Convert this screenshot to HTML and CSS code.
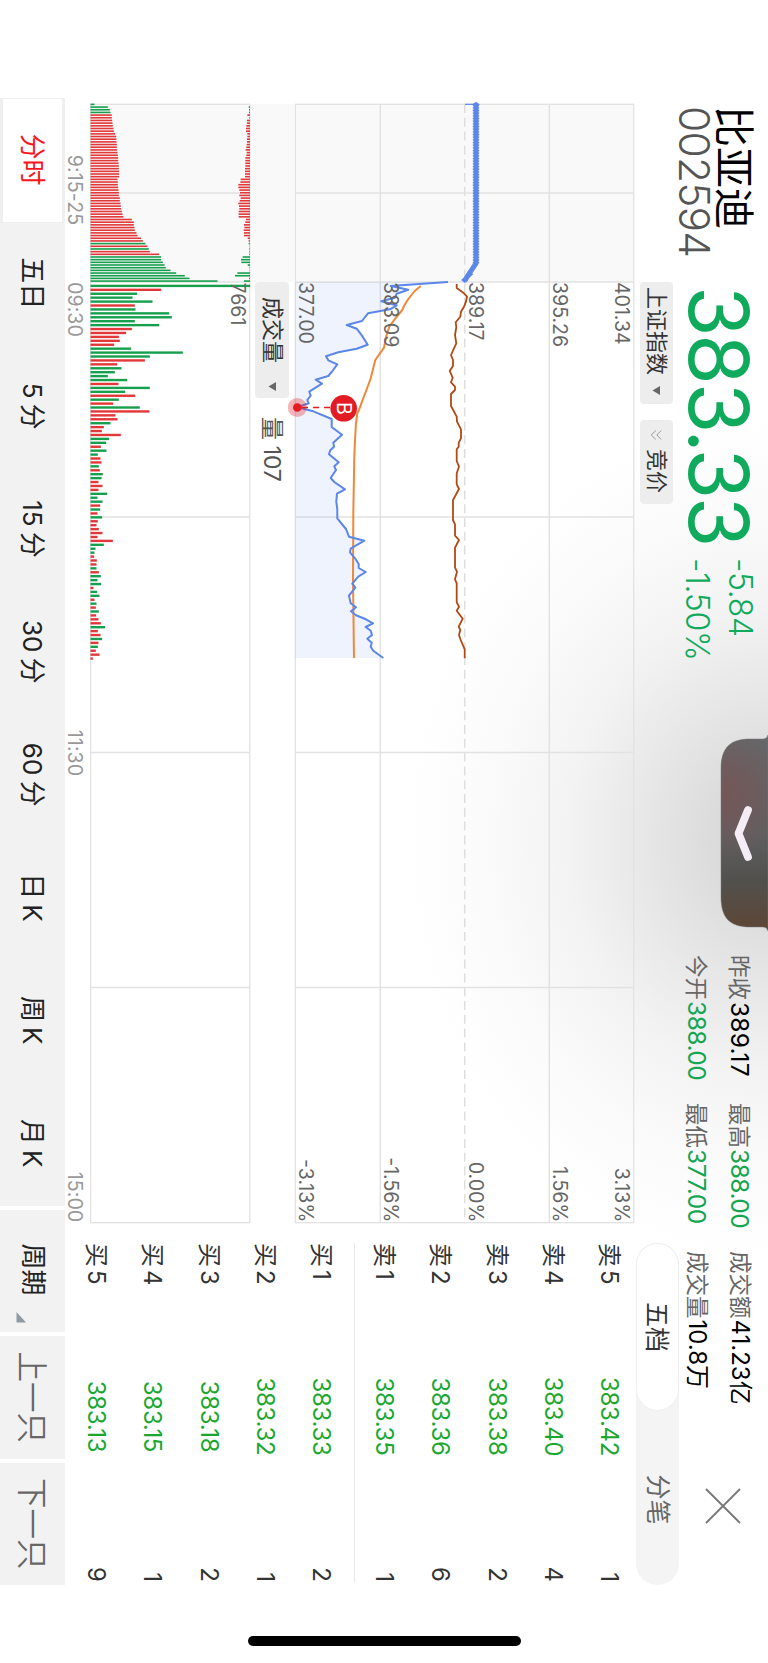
FILE: index.html
```html
<!DOCTYPE html>
<html lang="zh-CN">
<head>
<meta charset="utf-8">
<title>比亚迪 002594</title>
<link rel="stylesheet" href="styles.css">
</head>
<body>
<div class="device">
<div class="screen">
  <header class="quote">
    <div class="identity">
      <div class="name">比亚迪</div>
      <div class="code">002594</div>
    </div>
    <div class="price">383.33</div>
    <div class="change">
      <div>-5.84</div>
      <div class="pct">-1.50%</div>
    </div>
    <div class="stats">
      <div>昨收<b class="loose">389.17</b></div><div>最高<b class="down">388.00</b></div><div>成交额<b class="wide">41.23亿</b></div>
      <div>今开<b class="down">388.00</b></div><div>最低<b class="down">377.00</b></div><div>成交量<b class="wide">10.8万</b></div>
    </div>
    <svg class="close" width="38" height="38" viewBox="0 0 38 38"><path d="M2 2L36 36M36 2L2 36" fill="none" stroke="#777" stroke-width="1.8"/></svg>
  </header>

  <main class="main">
    <section class="market">
      <div class="pills">
        <div class="pill index">上证指数<svg width="9" height="8" viewBox="0 0 9 8"><path d="M0 0H9L4.5 7.5Z" fill="#666"/></svg></div>
        <div class="pill auction"><svg width="10" height="12" viewBox="0 0 10 12"><path d="M.6 .8L5 5.2L9.400 .8M.6 6.200L5 10.800L9.400 6.200" fill="none" stroke="#999" stroke-width="1"/></svg>竞价</div>
      </div>
      <svg class="chart" id="price" width="1119" height="339" viewBox="0 0 1119 339"></svg>
      <div class="indicator">
        <div class="band"></div>
        <div class="pill volume">成交量<svg width="9" height="8" viewBox="0 0 9 8"><path d="M0 0H9L4.500 7.500Z" fill="#666"/></svg></div>
        <div class="amount">量 107</div>
      </div>
      <svg class="chart" id="volume" width="1119" height="160" viewBox="0 0 1119 160"></svg>
      <svg class="chart" id="axis" width="1119" height="25" viewBox="0 0 1119 25"></svg>
    </section>

    <aside class="book">
      <div class="switch"><div class="on">五档</div><div class="off">分笔</div></div>
      <div class="rows asks">
        <div class="row"><span>卖<i>5</i></span><b>383.42</b><em>1</em></div>
        <div class="row"><span>卖<i>4</i></span><b>383.40</b><em>4</em></div>
        <div class="row"><span>卖<i>3</i></span><b>383.38</b><em>2</em></div>
        <div class="row"><span>卖<i>2</i></span><b>383.36</b><em>6</em></div>
        <div class="row"><span>卖<i>1</i></span><b>383.35</b><em>1</em></div>
      </div>
      <div class="rows bids">
        <div class="row"><span>买<i>1</i></span><b>383.33</b><em>2</em></div>
        <div class="row"><span>买<i>2</i></span><b>383.32</b><em>1</em></div>
        <div class="row"><span>买<i>3</i></span><b>383.18</b><em>2</em></div>
        <div class="row"><span>买<i>4</i></span><b>383.15</b><em>1</em></div>
        <div class="row"><span>买<i>5</i></span><b>383.13</b><em>9</em></div>
      </div>
    </aside>
  </main>

  <nav class="tabs">
    <div class="periods">
      <div class="tab active">分时</div><div class="tab">五日</div><div class="tab">5<s></s>分</div><div class="tab">15<s></s>分</div><div class="tab">30<s></s>分</div><div class="tab">60<s></s>分</div><div class="tab">日<s></s>K</div><div class="tab">周<s></s>K</div><div class="tab">月<s></s>K</div>
    </div>
    <div class="action cycle">周期<svg width="11" height="10" viewBox="0 0 11 10"><path d="M10.500 0V9.500H0Z" fill="#8f9aa3"/></svg></div>
    <div class="action step">上一只</div>
    <div class="action step">下一只</div>
  </nav>

  <svg class="drawer" width="210" height="48" viewBox="0 0 210 48">
    <defs>
      <linearGradient id="dg" x1="0" x2="1" y1="0" y2="0"><stop offset="0" stop-color="#66686a"/><stop offset=".5" stop-color="#5e6062"/><stop offset=".75" stop-color="#52504c"/><stop offset="1" stop-color="#5e4636"/></linearGradient>
      <radialGradient id="dr" gradientUnits="userSpaceOnUse" cx="66" cy="46" r="68"><stop offset="0" stop-color="#775556" stop-opacity=".9"/><stop offset=".4" stop-color="#775556" stop-opacity=".6"/><stop offset="1" stop-color="#775556" stop-opacity="0"/></radialGradient>
    </defs>
    <path d="M7 0Q11 1 11 5V18C11 38 20 47 41 47H169C190 47 199 38 199 18V5Q199 1 203 0Z" fill="url(#dg)"/>
    <path d="M7 0Q11 1 11 5V18C11 38 20 47 41 47H169C190 47 199 38 199 18V5Q199 1 203 0Z" fill="url(#dr)" stroke="#777" stroke-opacity=".5"/>
    <path d="M82 20L105.500 29.500L129 20" fill="none" stroke="#f4edf5" stroke-width="7.800" stroke-linecap="round" stroke-linejoin="round"/>
  </svg>
  <div class="home"></div>
</div>
</div>
<script src="chart.js"></script>
</body>
</html>
```
FILE: styles.css
```css
* { box-sizing: border-box; }
body { margin: 0; background: #fff; }
b, i, em, s { font-weight: inherit; font-style: normal; text-decoration: none; }

.device { width: 768px; height: 1663px; overflow: hidden; }

/* Landscape layout shown on a portrait canvas */
.screen {
  position: relative;
  width: 1663px;
  height: 768px;
  transform-origin: 0 0;
  transform: translateX(768px) rotate(90deg);
  display: flex;
  flex-direction: column;
  font-family: Inter, "Noto Sans CJK SC", sans-serif;
  color: #333;
  white-space: nowrap;
  background: radial-gradient(ellipse 420px 360px at 840px 0, #d3d3d3 0, #dedede 20%, #e9e9e9 38%, #f3f3f3 56%, #fafafa 76%, #fff 100%);
}

.quote { height: 89px; padding-left: 106px; display: flex; align-items: flex-start; flex: none; }
.identity { width: 181px; flex: none; }
.name { margin-top: 14px; font-size: 41px; line-height: 40px; color: #000; }
.code { font-size: 42.500px; line-height: 40px; font-weight: 350; color: #555; letter-spacing: -.8px; }
.price { width: 273px; flex: none; margin: 10px 0 0 -1px; font-size: 82px; line-height: 80px; font-weight: 370; color: #0faa5c; letter-spacing: -2.300px; }
.change { width: 397px; flex: none; margin-left: -1px; padding-top: 12px; font-size: 32px; line-height: 32px; color: #0faa5c; letter-spacing: -.4px; font-weight: 350; }
.change .pct { margin-top: 11px; letter-spacing: -.3px; }
.stats {
  width: 448px;
  flex: none;
  padding-top: 12px;
  display: grid;
  grid-template-columns: 148px 148px 152px;
  grid-auto-rows: 32px;
  row-gap: 11px;
  line-height: 32px;
  font-size: 22.500px;
  color: #666;
}
.stats b { color: #000; font-size: 24.500px; letter-spacing: -.5px; margin-left: 1px; }
.stats b.loose { letter-spacing: .2px; margin-left: 2px; }
.stats b.down { color: #16a550; }
.stats b.wide { font-size: 24px; letter-spacing: 0; }
.close { margin: 26px 0 0 84px; }

.main { height: 614px; flex: none; display: flex; padding-left: 104px; gap: 20px; }
.market { width: 1119px; padding-top: 6px; }
.pills { display: flex; gap: 16px; padding-left: 178px; height: 39px; }
.pill { height: 33px; border-radius: 4px; background: #ededed; display: flex; align-items: center; font-size: 22px; line-height: 33px; }
.pill.index { width: 122px; padding-left: 5px; gap: 11px; }
.pill.auction { width: 84px; padding-left: 10px; gap: 9px; }
.chart { display: block; overflow: visible; }
.indicator { height: 45px; display: flex; align-items: center; }
.band { width: 178px; height: 45px; background: #f9f9f9; }
.pill.volume { width: 116px; height: 34px; padding-left: 15px; gap: 19px; }
.amount { padding: 0 0 3px 19px; font-size: 23px; color: #555; letter-spacing: -.3px; }

.book { width: 342px; }
.switch { height: 43px; border-radius: 22px; background: #f4f4f4; display: flex; font-size: 25px; line-height: 42px; text-align: center; }
.switch .on { width: 168px; border-radius: 22px; border: 1px solid #eee; background: #fff; }
.switch .off { width: 174px; color: #666; padding-left: 3px; }
.rows { margin: 0 3px 0 0; }
.asks { margin-top: -1px; }
.bids { margin-top: 1px; border-top: 1.500px solid #e9e9e9; padding-top: 5px; }
.row { height: 56.200px; line-height: 56px; display: grid; grid-template-columns: 94px 159px 86px; font-size: 24px; }
.row i { margin-left: 3px; }
.row b { color: #1ba72f; text-align: center; letter-spacing: -.3px; }
.row em { text-align: right; }

.tabs { height: 65px; flex: none; margin-left: 98px; display: flex; gap: 4px; width: 1487px; font-size: 26px; line-height: 66px; }
.periods { width: 1108px; background: #f2f2f2; display: flex; }
.tab { flex: 1; text-align: center; color: #222; padding-right: 2px; }
.tab s { display: inline-block; width: 5px; }
.tab.active { background: #fff; border: 2px solid #efefef; border-width: 3px 1px; line-height: 60px; color: #f6161c; }
.action { background: #f2f2f2; color: #222; }
.cycle { width: 122.500px; padding-left: 34px; display: flex; align-items: flex-end; gap: 16px; }
.cycle svg { margin-bottom: 16px; }
.step { width: 122.500px; text-align: center; font-size: 30.500px; color: #666; font-weight: 350; }

.drawer { position: absolute; left: 728px; top: 0; }
.home { position: absolute; left: 1636px; top: 247px; width: 10px; height: 273px; border-radius: 5px; background: #000; }

.lbl { font-size: 19.500px; fill: #666; }
.time { font-size: 19.500px; fill: #999; letter-spacing: .1px; }
```
FILE: chart.js
```javascript
const NS = 'http://www.w3.org/2000/svg';
function add(parent, tag, attrs, text) {
  const el = document.createElementNS(NS, tag);
  for (const k in attrs) el.setAttribute(k, attrs[k]);
  if (text) el.textContent = text;
  parent.appendChild(el);
  return el;
}
const W = 1119, OPEN = 178, GRID = '#e2e2e2';
const RED = '#e2383a', GREEN = '#16a04e';
const columns = [89, OPEN, 413, 648.5, 883.500];

/* ---------- price pane ---------- */
const price = document.getElementById('price');
add(price, 'rect', { x: 0, y: 0, width: OPEN, height: 339, fill: '#f9f9f9' });
[84.700, 253.700].forEach(y => add(price, 'path', { d: `M0 ${y}H${W}`, stroke: GRID, 'stroke-width': 1.500 }));
add(price, 'path', { d: `M0 169.300H${W}`, stroke: '#dedede', 'stroke-width': 1.500, 'stroke-dasharray': '9 4.800' });
columns.forEach(x => add(price, 'path', { d: `M${x} 0V339`, stroke: GRID, 'stroke-width': 1.300 }));
add(price, 'rect', { x: .3, y: .3, width: W - .6, height: 338.400, fill: 'none', stroke: GRID, 'stroke-width': 1.300 });

/* samples are [level, tick] in thirds of a pixel */
const pt = ([a, b]) => `${(b / 3 - 14).toFixed(1)},${(354 - a / 3).toFixed(1)}`;
const pairs = s => s.trim().split(/\s+/).map(p => p.split(',').map(Number));
const line = (samples, color, width) => add(price, 'polyline', {
  points: samples.map(pt).join(' '), fill: 'none', stroke: color, 'stroke-width': width, 'stroke-linejoin': 'round'
});

const last = pairs(`504,576 332,588 385,599 350,611 345,623 304,634 350,646 330,658 264,670 246,693 200,705 230,716
248,740 263,764 230,776 175,787 138,799 145,811 172,823 155,846 145,858 107,869 126,881 88,905 92,917 82,930 86,940
52,952 100,964 155,987 155,1011 186,1034 160,1058 162,1070 151,1081 147,1093 176,1117 163,1129 168,1140 152,1164
163,1176 195,1198 171,1211 169,1235 172,1258 172,1285 198,1317 207,1340 253,1352 212,1376 210,1387 225,1405 236,1422
236,1434 257,1446 235,1460 217,1481 226,1493 207,1517 212,1540 228,1552 213,1564 228,1576 258,1588 279,1600 257,1611
272,1622 276,1635 262,1646 275,1658 272,1670 280,1682 310,1704`);
const average = pairs(`422,588 404,603 385,627 372,648 367,660 348,683 328,710 318,742 312,773 286,810 272,865 265,885
246,935 237,960 232,970 228,1000 225,1050 223,1100 220,1270 219,1470 222,1704`);
const index = pairs(`530,582 530,594 550,608 561,620 558,635 552,650 543,665 541,680 527,697 529,712 525,735 529,760
513,795 519,810 519,828 509,843 518,863 513,877 525,890 525,900 513,912 513,948 530,980 531,995 543,1018 543,1045
536,1058 536,1070 530,1078 530,1113 537,1130 530,1150 530,1183 537,1197 519,1230 519,1290 525,1303 525,1337 537,1350
525,1373 525,1433 531,1445 525,1468 530,1480 530,1537 537,1550 530,1562 548,1586 536,1610 541,1620 537,1635 542,1650
554,1678 554,1705`);

add(price, 'polygon', {
  points: [[46, 576], ...last, [46, 1704]].map(pt).join(' '), fill: '#5b86ec', 'fill-opacity': .1
});
line(index, '#b14a12', 1.800);
line(average, '#f0883a', 2);
line(last, '#5b86ea', 2);

line([[555, 43], [588, 43]], '#5b86ea', 1.200);
line([[588, 40], [588, 520], [570, 547], [554, 572]], '#5b86ea', 5);
add(price, 'path', { d: 'M.5 158H160', stroke: '#5b86ea', 'stroke-width': 6.500, 'stroke-dasharray': '1.300 1.370' });
[[588, 44], [569, 553], [554, 570]].forEach(p => {
  const [x, y] = pt(p).split(',').map(Number);
  add(price, 'path', { d: `M${x - 3} ${y}L${x} ${y - 3.600}L${x + 3} ${y}L${x} ${y + 3.600}Z`, fill: '#5b86ea' });
});

[['401.34', 19], ['395.26', 81], ['389.17', 165.500], ['383.09', 250], ['377.00', 335]].forEach(([t, y]) =>
  add(price, 'text', { x: 178, y, class: 'lbl' }, t));
[['3.13%', 19], ['1.56%', 81], ['0.00%', 165.500], ['-1.56%', 250], ['-3.13%', 335]].forEach(([t, y]) =>
  add(price, 'text', { x: 1118.500, y, class: 'lbl', 'text-anchor': 'end' }, t));

add(price, 'circle', { cx: 303.500, cy: 336.700, r: 9.500, fill: '#e31b23', 'fill-opacity': .32 });
add(price, 'circle', { cx: 303.500, cy: 336.700, r: 4.300, fill: '#e31b23' });
add(price, 'path', { d: 'M303.500 332V303', stroke: '#e31b23', 'stroke-width': 1.400, 'stroke-dasharray': '6 5' });
add(price, 'circle', { cx: 304.300, cy: 290.300, r: 13.300, fill: '#e31b23' });
add(price, 'text', { x: 304.300, y: 297.300, 'text-anchor': 'middle', 'font-size': 19.500, fill: '#fff' }, 'B');

/* ---------- volume pane ---------- */
const volume = document.getElementById('volume');
add(volume, 'rect', { x: 0, y: 0, width: OPEN, height: 159.500, fill: '#f9f9f9' });
columns.forEach(x => add(volume, 'path', { d: `M${x} 0V159.500`, stroke: GRID, 'stroke-width': 1.300 }));
add(volume, 'rect', { x: .3, y: .3, width: W - .6, height: 159, fill: 'none', stroke: GRID, 'stroke-width': 1.300 });

const bars = s => s.trim().split(/\s+/).map(v => ({ color: v.endsWith('g') ? GREEN : RED, h: parseFloat(v) / 3 }));
const matched = bars(`12g 52g 58g 60g 64 64 65 66 67 69 70 74 77 78 78 79 79 80 81 82 83 83 84 85 85 86 86 86 81 82
82 83 84 85 85 88 88 90 91 92 94 96 99 124 130 130 132 133 138 141 152 157 165g 171 175g 178 206 212g 212g 217g 222g
226g 240g 257g 283g 297g 381g`);
const unmatched = bars(`0 4g 3g 3g 8 2 9 9 11 12 12 8 8 9 9 10 11 13 10 11 14 14 14 14 15 15 15 15 28 29 35 35 32 30
32 28 31 35 33 32 34 34 34 12 14 18 17 19 18 18 7 4 4g 1 2g 2 2 22g 27g 26g 7g 1 1 38g 45g 3g 18g`);
const minutes = bars(`479g 212 140g 126g 186g 133 135g 236g 244g 133g 206g 124 107 85 88 71 122g 277g 178g 163 80 93g
73g 52g 110g 84 178g 104g 134 85g 68 148g 177 75 81 60g 40 34 91 56g 47g 31 48g 22g 30 33 25g 28 37g 33g 24 36 24 50g
21g 36g 29 29g 21 35g 22 18 25 36 21 67 40g 15g 12g 11 19 18 18g 25 31g 21g 32g 9 20g 27g 12 18g 16 25g 17 24 31 44g
22 30 35g 24 22g 16 27 7`);
const bar = (cx, y, w, b) => add(volume, 'rect', { x: (cx - w / 2).toFixed(2), y, width: w, height: b.h, fill: b.color });
matched.forEach((b, i) => bar(.4 + i * 2.677, 159.500 - b.h, 1.600, b));
unmatched.forEach((b, i) => bar(.4 + i * 2.677, 0, 1.600, b));
minutes.forEach((b, i) => bar(181.900 + i * 3.923, 159.500 - b.h, 2.400, b));
add(volume, 'text', { x: 178.500, y: 19, class: 'lbl' }, '7661');

/* ---------- time axis ---------- */
const axis = document.getElementById('axis');
[['9:15-25', 86], ['09:30', 205.500], ['11:30', 649], ['15:00', 1093]].forEach(([t, x]) =>
  add(axis, 'text', { x, y: 22, class: 'time', 'text-anchor': 'middle' }, t));
```
